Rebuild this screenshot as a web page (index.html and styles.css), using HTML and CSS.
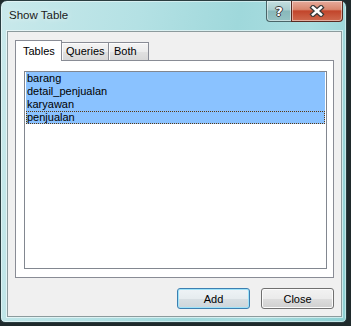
FILE: index.html
```html
<!DOCTYPE html>
<html lang="en">
<head>
  <meta charset="UTF-8">
  <title>Show Table</title>
  <link rel="stylesheet" href="styles.css">
</head>
<body>
  <div class="window">
    <div class="titlebar">
      <span class="title">Show Table</span>
      <div class="caption-btns">
        <span class="cap help">?</span>
        <span class="cap close">
          <svg width="16" height="12" viewBox="0 0 16 12">
            <path d="M4 2.5 L12 9.5 M12 2.5 L4 9.5" stroke="#3a3a3a" stroke-width="5" stroke-linecap="square"/>
            <path d="M4 2.5 L12 9.5 M12 2.5 L4 9.5" stroke="#ffffff" stroke-width="2.6" stroke-linecap="square"/>
          </svg>
        </span>
      </div>
    </div>

    <div class="client">
      <div class="tabs">
        <div class="tab active">Tables</div>
        <div class="tab queries">Queries</div>
        <div class="tab both">Both</div>
      </div>
      <div class="panel">
        <ul class="listbox">
          <li class="sel">barang</li>
          <li class="sel">detail_penjualan</li>
          <li class="sel">karyawan</li>
          <li class="sel focus">penjualan</li>
        </ul>
      </div>
      <div class="buttons">
        <button class="btn default">Add</button>
        <button class="btn">Close</button>
      </div>
    </div>
  </div>
</body>
</html>
```

FILE: styles.css
```css
body {
  margin: 0;
  width: 351px;
  height: 326px;
  background-color: #1f2a2c;
  font-family: "Liberation Sans", Arial, sans-serif;
  font-size: 11px;
  color: #000;
  overflow: hidden;
}
.window {
  box-sizing: border-box;
  width: 347px;
  height: 323px;
  border: 1px solid #2a3d40;
  border-radius: 7px 7px 5px 5px;
  background: linear-gradient(100deg, #c9e9eb 0%, #b4e1e4 35%, #9fd8db 60%, #aadde0 78%, #8ccfd2 100%);
  box-shadow: inset 0 0 0 1px rgba(255, 255, 255, 0.45);
  display: flex;
  flex-direction: column;
}
.titlebar {
  height: 30px;
  display: flex;
  justify-content: space-between;
  align-items: flex-start;
}
.title {
  margin: 8px 0 0 8px;
  font-size: 11.5px;
  color: #1a1a1a;
  text-shadow: 0 0 6px rgba(255, 255, 255, 0.8);
}
.caption-btns {
  display: flex;
  margin-right: 3px;
}
.cap {
  box-sizing: border-box;
  height: 21px;
  display: flex;
  align-items: center;
  justify-content: center;
  border: 1px solid #4a6568;
  border-top: none;
  box-shadow: inset 0 0 0 1px rgba(255, 255, 255, 0.45);
}
.help {
  width: 25px;
  border-right: none;
  border-radius: 0 0 0 4px;
  background: linear-gradient(#c4dfe0 0%, #a9cdce 45%, #88b8ba 50%, #96c3c4 100%);
  color: #fff;
  font-family: "DejaVu Sans", sans-serif;
  font-weight: bold;
  font-size: 13px;
  text-shadow: 1px 0 0 #3a3a3a, -1px 0 0 #3a3a3a, 0 1px 0 #3a3a3a, 0 -1px 0 #3a3a3a;
}
.close {
  width: 52px;
  border-color: #5a2b22;
  border-radius: 0 0 4px 0;
  background: linear-gradient(#e6ab9c 0%, #d9876f 42%, #c2452b 50%, #cf6a4f 100%);
}
.client {
  box-sizing: border-box;
  flex: 1;
  margin: 0 4px 5px 6px;
  padding: 8px 7px 0 7px;
  background-color: #f0f0f0;
  border: 1px solid #8c9b9d;
  box-shadow: 0 0 0 1px rgba(255, 255, 255, 0.55);
}
.tabs {
  display: flex;
  align-items: flex-end;
  height: 20px;
  position: relative;
  z-index: 1;
}
.tab {
  box-sizing: border-box;
  height: 18px;
  padding: 2px 0 0 4px;
  border: 1px solid #898c95;
  border-bottom: none;
  border-left: none;
  background: linear-gradient(#f4f4f4 0%, #ececec 50%, #e1e1e1 51%, #d8d8d8 100%);
  box-shadow: inset 1px 1px 0 #fcfcfc;
}
.tab.active {
  width: 47px;
  height: 21px;
  margin-bottom: -1px;
  padding: 4px 0 0 7px;
  border-left: 1px solid #898c95;
  background: #ffffff;
  box-shadow: none;
}
.tab.queries {
  width: 47px;
}
.tab.both {
  width: 40px;
  padding-left: 5px;
}
.panel {
  box-sizing: border-box;
  height: 218px;
  padding: 10px 6px 8px 8px;
  background-color: #ffffff;
  border: 1px solid #898c95;
}
.listbox {
  box-sizing: border-box;
  height: 198px;
  margin: 0;
  padding: 0 1px;
  list-style: none;
  border: 1px solid #828790;
}
.listbox li {
  box-sizing: border-box;
  height: 13px;
  line-height: 13px;
  padding-left: 1px;
}
.listbox li.sel {
  background-color: #8ac2ff;
}
.listbox li.focus {
  outline: 1px dotted #5b3812;
  outline-offset: -1px;
}
.buttons {
  display: flex;
  justify-content: flex-end;
  gap: 11px;
  margin-top: 10px;
}
.btn {
  box-sizing: border-box;
  width: 73px;
  height: 21px;
  padding: 0;
  font-family: "Liberation Sans", Arial, sans-serif;
  font-size: 11px;
  color: #000;
  border: 1px solid #707070;
  border-radius: 3px;
  background: linear-gradient(#f2f2f2 0%, #ebebeb 50%, #dddddd 51%, #cfcfcf 100%);
  box-shadow: inset 0 0 0 1px #fbfbfb;
}
.btn.default {
  border-color: #3c7fb1;
  background: linear-gradient(#eef3f6 0%, #e6ecef 50%, #d8dfe3 51%, #cdd5da 100%);
  box-shadow: inset 0 0 0 1px #9fe3f9;
}
```
